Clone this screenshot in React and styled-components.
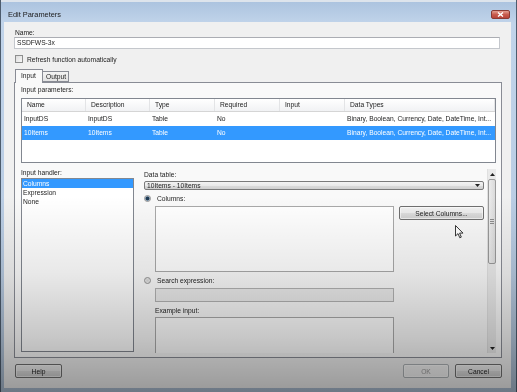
import React from 'react'
import styled, { createGlobalStyle } from 'styled-components'

const GlobalStyle = createGlobalStyle`
  * { box-sizing: border-box; }
  html, body { margin: 0; padding: 0; background: #3c4b5c; }
  body {
    font-family: "Liberation Sans", Arial, sans-serif;
    font-size: 6.7px;
    color: #1c1c1c;
    -webkit-font-smoothing: antialiased;
  }
`

const Screen = styled.div`
  position: relative;
  width: 517px;
  height: 392px;
  overflow: hidden;
  display: flex;
  flex-direction: column;
  padding: 0 6px 4px 4px;
  background: linear-gradient(#aac2de, #c1d4ea 6%, #b9cce3 60%, #a9bbcf);
  box-shadow: inset 1px 0 0 #4d5c6d, inset -1px 0 0 #4d5c6d, inset 0 2px 0 #dde4ec;
  will-change: transform;
`

const TitleBar = styled.div`
  height: 22px;
  padding: 7px 1px 0 4px;
  display: flex;
  align-items: center;
  justify-content: space-between;
  font-size: 7.4px;
  color: #1a1a1a;
`

const CloseButton = styled.div`
  width: 19px;
  height: 9px;
  border-radius: 2px;
  border: 1px solid #8a3a33;
  background: linear-gradient(#e4a093, #c85b4d 50%, #b8443a);
  display: flex;
  align-items: center;
  justify-content: center;
`

const Client = styled.div`
  flex: 1;
  display: flex;
  flex-direction: column;
  padding: 6px 9px 10px 10px;
  background: #f0f0f0;
`

const Label = styled.div`
  line-height: 9px;
  height: 9px;
  white-space: nowrap;
  padding-left: ${p => p.$indent || 0}px;
  margin-top: ${p => p.$top || 0}px;
`

const TextBox = styled.div`
  height: ${p => p.$h || 12}px;
  margin-right: 2px;
  border: 1px solid #c4c7cc;
  border-top-color: #abadb3;
  background: #fff;
  padding-left: 2px;
  line-height: 10px;
`

const CheckRow = styled.div`
  margin-top: 6px;
  height: 8px;
  display: flex;
  align-items: center;
  gap: 4px;
  padding-left: 1px;
`

const CheckBox = styled.div`
  width: 8px;
  height: 8px;
  border: 1px solid #8e8f8f;
  background: linear-gradient(135deg, #dcdcdc, #f8f8f8);
`

const TabStrip = styled.div`
  margin-top: 6px;
  height: 13px;
  display: flex;
  align-items: flex-end;
  padding-left: 1px;
  position: relative;
  z-index: 1;
`

const Tab = styled.div`
  height: ${p => (p.$active ? 14 : 11)}px;
  margin-bottom: ${p => (p.$active ? -1 : 0)}px;
  padding: 0 ${p => (p.$active ? 5 : 3)}px;
  width: ${p => p.$w}px;
  border: 1px solid #898c95;
  border-bottom: ${p => (p.$active ? 'none' : '1px solid #898c95')};
  border-left: ${p => (p.$active ? '1px solid #898c95' : 'none')};
  background: ${p => (p.$active ? '#f9f9f9' : 'linear-gradient(#f3f3f3, #e3e3e3)')};
  line-height: ${p => (p.$active ? 12 : 9)}px;
  white-space: nowrap;
`

const Panel = styled.div`
  height: 276px;
  border: 1px solid #898c95;
  background: #f9f9f9;
  padding: 2px 5px 4px 6px;
  display: flex;
  flex-direction: column;
`

const Table = styled.div`
  margin-top: 4px;
  height: 65px;
  border: 1px solid #828790;
  background: #fff;
  overflow: hidden;
`

const GridRow = styled.div`
  display: grid;
  grid-template-columns: 64px 64px 65px 65px 65px 1fr;
  height: ${p => (p.$head ? 13 : 14)}px;
  align-items: center;
  background: ${p => (p.$head ? 'linear-gradient(#ffffff, #f1f2f4)' : p.$selected ? '#3399ff' : '#fff')};
  color: ${p => (p.$selected ? '#fff' : '#1c1c1c')};
  border-bottom: ${p => (p.$head ? '1px solid #d5d5d5' : 'none')};
`

const Cell = styled.div`
  height: 100%;
  line-height: ${p => (p.$head ? 12 : 14)}px;
  padding-left: ${p => (p.$head ? 5 : 2)}px;
  white-space: nowrap;
  overflow: hidden;
  border-right: ${p => (p.$head ? '1px solid #e3e4e6' : 'none')};
`

const Lower = styled.div`
  margin-top: 5px;
  height: 185px;
  display: grid;
  grid-template-columns: 113px 1fr;
  column-gap: 10px;
`

const LeftCol = styled.div`
  display: flex;
  flex-direction: column;
`

const ListBox = styled.div`
  margin-top: 1px;
  height: 174px;
  border: 1px solid #828790;
  background: #fff;
`

const ListItem = styled.div`
  height: 9px;
  line-height: 9px;
  padding-left: 1px;
  background: ${p => (p.$selected ? '#3399ff' : 'transparent')};
  color: ${p => (p.$selected ? '#fff' : '#1c1c1c')};
`

const RightCol = styled.div`
  display: flex;
  gap: 3px;
`

const ScrollContent = styled.div`
  flex: 1;
  height: 185px;
  overflow: hidden;
  padding-top: 2px;
  display: flex;
  flex-direction: column;
`

const Combo = styled.div`
  margin-top: 2px;
  height: 12px;
  border: 1px solid #7a7a7a;
  border-radius: 2px;
  background: linear-gradient(#f3f3f3, #e9e9e9 50%, #dcdcdc 51%, #cfcfcf);
  display: flex;
  align-items: center;
  justify-content: space-between;
  padding: 0 3px 0 2px;
`

const RadioRow = styled.div`
  margin-top: ${p => p.$top}px;
  height: 10px;
  display: flex;
  align-items: center;
  gap: 6px;
`

const Radio = styled.div`
  width: 7px;
  height: 7px;
  border-radius: 50%;
  border: 1px solid #929292;
  background: ${p => (p.$checked
    ? 'radial-gradient(circle, #1f3a52 0 1.4px, #6c8aa5 2px, #e8e8e8 2.6px)'
    : 'radial-gradient(circle, #d4d4d4, #f2f2f2)')};
`

const ColumnsRow = styled.div`
  margin-top: 4px;
  padding-left: 11px;
  display: flex;
  gap: 5px;
  align-items: flex-start;
`

const Field = styled.div`
  width: 239px;
  height: ${p => p.$h}px;
  margin-left: ${p => p.$indent || 0}px;
  margin-top: ${p => p.$top || 0}px;
  flex-shrink: 0;
  border: 1px solid ${p => (p.$disabled ? '#b2b2b2' : '#a9a9a9')};
  background: ${p => (p.$disabled ? '#ececec' : '#fff')};
`

const Button = styled.div`
  width: ${p => p.$w}px;
  height: 14px;
  border: 1px solid ${p => (p.$disabled ? '#adb2b5' : '#707070')};
  border-radius: 2px;
  background: ${p => (p.$disabled
    ? '#f4f4f4'
    : 'linear-gradient(#f2f2f2, #ebebeb 50%, #dddddd 51%, #cfcfcf)')};
  color: ${p => (p.$disabled ? '#9a9a9a' : '#1c1c1c')};
  display: flex;
  align-items: center;
  justify-content: center;
  white-space: nowrap;
  box-shadow: inset 0 0 0 1px rgba(255, 255, 255, 0.6);
`

const ScrollBar = styled.div`
  width: 9px;
  height: 184px;
  margin-top: 1px;
  background: #eaeaea;
  border-left: 1px solid #e0e0e0;
  display: flex;
  flex-direction: column;
  align-items: center;
`

const ScrollArrow = styled.div`
  height: 10px;
  display: flex;
  align-items: center;
  justify-content: center;
`

const Thumb = styled.div`
  width: 8px;
  height: 85px;
  border: 1px solid #9a9a9a;
  border-radius: 2px;
  background: linear-gradient(to right, #ececec, #dadada);
  display: flex;
  flex-direction: column;
  align-items: center;
  justify-content: center;
  gap: 1px;
`

const Grip = styled.div`
  width: 4px;
  height: 1px;
  background: #8c8c8c;
`

const Footer = styled.div`
  margin-top: 6px;
  display: flex;
  padding-left: 1px;
  gap: 6px;
`

const Spacer = styled.div`
  flex: 1;
`

const Cursor = styled.svg`
  position: absolute;
  left: 455px;
  top: 225px;
`

const Vignette = styled.div`
  position: absolute;
  inset: 0;
  pointer-events: none;
  background: linear-gradient(
    rgba(0, 0, 0, 0) 0%,
    rgba(0, 0, 0, 0) 50%,
    rgba(0, 0, 0, 0.09) 70%,
    rgba(0, 0, 0, 0.22) 86%,
    rgba(0, 0, 0, 0.36) 100%
  );
`

const params = [
  { name: 'InputDS', description: 'InputDS', type: 'Table', required: 'No', input: '', types: 'Binary, Boolean, Currency, Date, DateTime, Int...' },
  { name: '10Items', description: '10Items', type: 'Table', required: 'No', input: '', types: 'Binary, Boolean, Currency, Date, DateTime, Int...', selected: true },
]

const headers = ['Name', 'Description', 'Type', 'Required', 'Input', 'Data Types']

const Triangle = ({ up }) => (
  <svg width="5" height="3" viewBox="0 0 5 3">
    <path d={up ? 'M0 3 L2.5 0 L5 3 Z' : 'M0 0 L5 0 L2.5 3 Z'} fill="#222" />
  </svg>
)

const App = () => {
  return (
    <>
      <GlobalStyle />
      <Screen>
        <TitleBar>
          <span>Edit Parameters</span>
          <CloseButton>
            <svg width="7" height="5" viewBox="0 0 7 5">
              <path d="M1 0.5 L6 4.5 M6 0.5 L1 4.5" stroke="#fff" strokeWidth="1.4" />
            </svg>
          </CloseButton>
        </TitleBar>

        <Client>
          <Label $indent={1}>Name:</Label>
          <TextBox>SSDFWS-3x</TextBox>
          <CheckRow>
            <CheckBox />
            <span>Refresh function automatically</span>
          </CheckRow>

          <TabStrip>
            <Tab $active $w={28}>Input</Tab>
            <Tab $w={26}>Output</Tab>
          </TabStrip>

          <Panel>
            <Label>Input parameters:</Label>
            <Table>
              <GridRow $head>
                {headers.map(h => <Cell $head key={h}>{h}</Cell>)}
              </GridRow>
              {params.map(p => (
                <GridRow key={p.name} $selected={p.selected}>
                  <Cell>{p.name}</Cell>
                  <Cell>{p.description}</Cell>
                  <Cell>{p.type}</Cell>
                  <Cell>{p.required}</Cell>
                  <Cell>{p.input}</Cell>
                  <Cell>{p.types}</Cell>
                </GridRow>
              ))}
            </Table>

            <Lower>
              <LeftCol>
                <Label>Input handler:</Label>
                <ListBox>
                  <ListItem $selected>Columns</ListItem>
                  <ListItem>Expression</ListItem>
                  <ListItem>None</ListItem>
                </ListBox>
              </LeftCol>

              <RightCol>
                <ScrollContent>
                  <Label>Data table:</Label>
                  <Combo>
                    <span>10Items - 10Items</span>
                    <Triangle />
                  </Combo>
                  <RadioRow $top={5}>
                    <Radio $checked />
                    <span>Columns:</span>
                  </RadioRow>
                  <ColumnsRow>
                    <Field $h={66} />
                    <Button $w={85}>Select Columns...</Button>
                  </ColumnsRow>
                  <RadioRow $top={5}>
                    <Radio />
                    <span>Search expression:</span>
                  </RadioRow>
                  <Field $h={14} $indent={11} $top={4} $disabled />
                  <Label $indent={11} $top={4}>Example input:</Label>
                  <Field $h={40} $indent={11} $top={2} />
                </ScrollContent>
                <ScrollBar>
                  <ScrollArrow><Triangle up /></ScrollArrow>
                  <Thumb>
                    <Grip /><Grip /><Grip />
                  </Thumb>
                  <Spacer />
                  <ScrollArrow><Triangle /></ScrollArrow>
                </ScrollBar>
              </RightCol>
            </Lower>
          </Panel>

          <Footer>
            <Button $w={47}>Help</Button>
            <Spacer />
            <Button $w={46} $disabled>OK</Button>
            <Button $w={47}>Cancel</Button>
          </Footer>
        </Client>

        <Cursor width="9" height="14" viewBox="0 0 9 14">
          <path d="M0.5 0.5 L0.5 11 L3 8.6 L4.8 12.8 L6.3 12.1 L4.6 8.1 L8 8.1 Z" fill="#fff" stroke="#222" strokeWidth="0.9" strokeLinejoin="round" />
        </Cursor>
        <Vignette />
      </Screen>
    </>
  )
}

export default App
